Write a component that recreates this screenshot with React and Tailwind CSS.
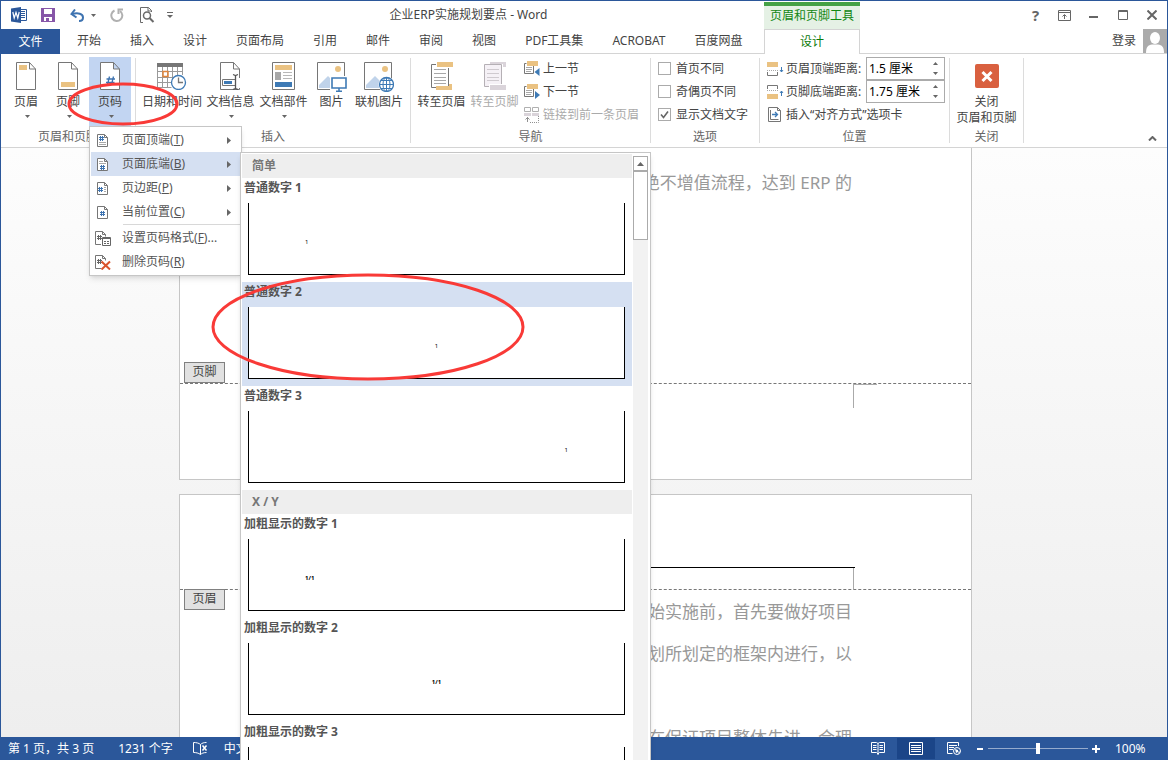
import clsx from 'clsx';

const TABS = ['开始', '插入', '设计', '页面布局', '引用', '邮件', '审阅', '视图', 'PDF工具集', 'ACROBAT', '百度网盘'];

const GALLERY = [
  {
    heading: '简单',
    items: [
      { name: '普通数字 1', sample: '1', align: 'justify-start' },
      { name: '普通数字 2', sample: '1', align: 'justify-center', active: true },
      { name: '普通数字 3', sample: '1', align: 'justify-end' },
    ],
  },
  {
    heading: 'X / Y',
    items: [
      { name: '加粗显示的数字 1', sample: '1/1', align: 'justify-start' },
      { name: '加粗显示的数字 2', sample: '1/1', align: 'justify-center' },
      { name: '加粗显示的数字 3', sample: '1/1', align: 'justify-end' },
    ],
  },
];

/* ---------- Icons ---------- */

const Svg = ({ w, h, children, className }) => (
  <svg
    width={w}
    height={h}
    viewBox={`0 0 ${w} ${h}`}
    fill="none"
    className={clsx('shrink-0', className)}
    aria-hidden="true"
  >
    {children}
  </svg>
);

const Caret = ({ className }) => (
  <Svg w={5} h={3} className={className}>
    <path d="M0 0h5L2.500 3z" fill="currentColor" />
  </Svg>
);

const WordIcon = () => (
  <Svg w={17} h={16}>
    <path d="M9.500 2.500h6v11h-6" fill="#fff" stroke="#2b579a" />
    <path d="M10 4.500h4M10 6.500h4M10 8.500h4M10 10.500h4" stroke="#2b579a" />
    <path d="M0 1.500L10 0v16L0 14.500z" fill="#2b579a" />
    <path d="M1.800 5l1.400 6L5 5.500 6.800 11l1.400-6" stroke="#fff" strokeWidth="1.200" />
  </Svg>
);

const SaveIcon = () => (
  <Svg w={14} h={14}>
    <path d="M0 0h14v14H0z" fill="#8756a8" />
    <path d="M3 1h8v5H3zM3 9h8v4H3z" fill="#fff" />
    <path d="M5 10h3v3H5z" fill="#8756a8" />
  </Svg>
);

const UndoIcon = () => (
  <Svg w={15} h={13}>
    <path d="M2 5c6-1.500 11-.5 11 3.500 0 2-1.500 3.500-4 3.500" stroke="#3e73b0" strokeWidth="2" />
    <path d="M5 .500L1.500 5l5 3.500" stroke="#3e73b0" strokeWidth="2" />
  </Svg>
);

const RedoIcon = () => (
  <Svg w={14} h={14}>
    <path d="M4.500 2.500A5.500 5.500 0 1 0 10 3" stroke="#b0b0b0" strokeWidth="2" />
    <path d="M8.500 6V1.500H13" stroke="#b0b0b0" strokeWidth="2" />
  </Svg>
);

const PreviewIcon = () => (
  <Svg w={15} h={16}>
    <path d="M3 15.500H.5V.5h8l3 3V5M8 .5V4h3.500" stroke="#6a6a6a" />
    <circle cx="7" cy="8.500" r="3.500" stroke="#6a6a6a" strokeWidth="1.500" />
    <path d="M9.500 11l4 4" stroke="#6a6a6a" strokeWidth="2" />
  </Svg>
);

const PageOutline = () => (
  <path d="M.5.5h13l6 6.500v20.500H.5zM13.500.5V7h6" fill="#fff" stroke="#767676" />
);

const HeaderIcon = () => (
  <Svg w={21} h={28}>
    <PageOutline />
    <path d="M3 3h8v5H3z" fill="#eac282" />
  </Svg>
);

const FooterIcon = () => (
  <Svg w={21} h={28}>
    <PageOutline />
    <path d="M3 20h14v5H3z" fill="#eac282" />
  </Svg>
);

const PageNumberIcon = () => (
  <Svg w={21} h={28}>
    <PageOutline />
    <path d="M9.500 14.500l-2 8M13.500 14.500l-2 8M6.500 17h8.500M6 20.500h8.500" stroke="#3e73b0" strokeWidth="1.300" />
  </Svg>
);

const DateTimeIcon = () => (
  <Svg w={30} h={28}>
    <path d="M0 1h26v4H0z" fill="#767676" />
    <path d="M.5 5v20.500h14M25.500 5v8M.5 9.500h25M.5 15.500h17M.5 20.500h14M5.500 5v20M10.500 5v20M15.500 5v12M20.500 5v8" stroke="#9a9a9a" />
    <path d="M6 9.500h5v5H6z" stroke="#e0853c" strokeWidth="1.500" />
    <circle cx="21.500" cy="20.500" r="7" fill="#fff" stroke="#3e7ab5" strokeWidth="1.300" />
    <path d="M21.500 15.500v5h4.500" stroke="#767676" strokeWidth="1.300" />
  </Svg>
);

const DocInfoIcon = () => (
  <Svg w={21} h={28}>
    <PageOutline />
    <path d="M11 16h9v10h-9z" fill="#fff" />
    <path d="M2.500 17.500h13v6h-13z" fill="#fff" stroke="#767676" />
    <path d="M4 19h8v3H4z" fill="#3e7ab5" />
    <path d="M13 12.500l2.500 1 2.500-1M15.500 13.500v13M13 27.500l2.500-1 2.500 1" stroke="#555" strokeWidth="1.300" />
  </Svg>
);

const DocPartsIcon = () => (
  <Svg w={23} h={28}>
    <path d="M.5.500h22v27H.5z" fill="#fff" stroke="#767676" />
    <path d="M3 3h17v5H3z" fill="#eac282" />
    <path d="M3 10h6v8H3z" fill="#a8a8a8" />
    <path d="M11 10.500h9M11 13.500h9M11 16.500h9" stroke="#b8b8b8" />
    <path d="M3 20h17v5H3z" fill="#3e7ab5" />
  </Svg>
);

const PictureBase = () => (
  <>
    <path d="M.5.500h27v27H.5z" fill="#fff" stroke="#767676" />
    <path d="M2 26V23l9-9 9 9v3z" fill="#c0d3ea" />
    <circle cx="21" cy="7" r="3" fill="#eac282" />
  </>
);

const PictureIcon = () => (
  <Svg w={30} h={30}>
    <PictureBase />
    <path d="M13 14h17v16H13z" fill="#fff" />
    <path d="M15 16h14v10H15z" stroke="#3e7ab5" strokeWidth="1.600" />
    <path d="M22 26v3M19 29.300h6" stroke="#3e7ab5" strokeWidth="1.500" />
  </Svg>
);

const OnlinePictureIcon = () => (
  <Svg w={30} h={30}>
    <PictureBase />
    <circle cx="22.500" cy="22.500" r="8" fill="#fff" />
    <circle cx="22.500" cy="22.500" r="7" stroke="#3e7ab5" strokeWidth="1.300" />
    <ellipse cx="22.500" cy="22.500" rx="3.500" ry="7" stroke="#3e7ab5" />
    <path d="M22.500 15.500v14M15.500 22.500h14M17 18.500h11M17 26.500h11" stroke="#3e7ab5" />
  </Svg>
);

const GotoHeaderIcon = () => (
  <Svg w={22} h={28}>
    <path d="M.5 2.500h17v23H.5z" fill="#fff" stroke="#767676" />
    <path d="M3 7.500h12M3 11.500h12M3 15.500h12M3 18.500h12M3 21.500h12" stroke="#a8a8a8" />
    <path d="M5 0h17v6H5z" fill="#fff" />
    <path d="M6 0h16v5H6zM5 24h13v-2h3v6H5z" fill="#eac282" />
  </Svg>
);

const GotoFooterIcon = () => (
  <Svg w={22} h={28}>
    <path d="M.5 2.500h17v22H.5z" fill="#f5f1f6" stroke="#b5b0b5" />
    <path d="M3 7.500h12M3 11.500h12M3 15.500h12M3 18.500h12" stroke="#cfcacf" />
    <path d="M6 0h16v5h-3V2H6z" fill="#dad4da" />
    <path d="M5 22h17v6H5z" fill="#fff" />
    <path d="M6 23h16v5H6z" fill="#dad4da" />
  </Svg>
);

const SectionIcon = ({ next }) => (
  <Svg w={16} h={15}>
    <path d="M2.500 2.500h-2v10h9V4" stroke="#767676" />
    <path d="M2 6.500h6M2 8.500h6M2 10.500h5" stroke="#a8a8a8" />
    <path d="M3 0h11v5H3z" fill="#eac282" />
    <path d={next ? 'M11 7l5 4-5 4z' : 'M15.500 7v8l-5-4z'} fill="#3e7ab5" />
  </Svg>
);

const LinkPreviousIcon = () => (
  <Svg w={16} h={16}>
    <path d="M.5.500h6v4h-6zM8.500.500h6v4h-6z" stroke="#b0b0b0" />
    <path d="M0 6h7v3H0zM8 6h7v3H8z" fill="#dad4da" />
    <path d="M3.500 15v-5M1.500 12.500l2-2 2 2" stroke="#909090" />
    <path d="M6 15.500h8.500V9" stroke="#909090" strokeDasharray="1 1" />
  </Svg>
);

const DistanceIcon = ({ footer }) => (
  <Svg w={17} h={14}>
    {footer ? (
      <>
        <path d="M.5 4V.500h10V4" stroke="#767676" />
        <path d="M0 9h11v5H0z" fill="#eac282" />
        <path d="M0 5.500h11" stroke="#a8a8a8" strokeDasharray="1 1" />
        <path d="M14.500 11V6M13 8l1.500-2L16 8" stroke="#3e7ab5" />
      </>
    ) : (
      <>
        <path d="M0 0h11v5H0z" fill="#eac282" />
        <path d="M.5 10v3.500h10V10" stroke="#767676" />
        <path d="M0 8.500h11" stroke="#a8a8a8" strokeDasharray="1 1" />
        <path d="M14.500 5v5M13 8l1.500 2L16 8" stroke="#3e7ab5" />
      </>
    )}
  </Svg>
);

const AlignTabIcon = () => (
  <Svg w={13} h={15}>
    <path d="M.5.500h9l3 3v11H.5zM9.500.5v3h3M2.500 3v9.500h8" stroke="#767676" />
    <path d="M4 7.500h5M7 5l2.500 2.500L7 10" stroke="#3e7ab5" strokeWidth="1.300" />
  </Svg>
);

const CloseRibbonIcon = () => (
  <Svg w={24} h={24}>
    <rect width="24" height="24" rx="2" fill="#d9603f" />
    <path d="M7.500 8l9 9M16.500 8l-9 9" stroke="#fff" strokeWidth="3" />
  </Svg>
);

const NumberGlyph = ({ x, y, color = '#3e73b0' }) => (
  <path
    d={`M${x + 1.5} ${y}v5M${x + 3.5} ${y}v5M${x} ${y + 1.5}h5M${x} ${y + 3.5}h5`}
    stroke={color}
  />
);

const MenuIcon = ({ kind }) => (
  <Svg w={17} h={15}>
    {(kind === 'top' || kind === 'bottom' || kind === 'margin' || kind === 'current') && (
      <path d="M2.500 1.500h7l3 3v9h-10v-12zM9.500 1.500v3h3" fill="#fff" stroke="#767676" />
    )}
    {kind === 'top' && (
      <>
        <NumberGlyph x={4} y={3} />
        <path d="M4 9.500h7M4 11.500h7" stroke="#a8a8a8" />
      </>
    )}
    {kind === 'bottom' && (
      <>
        <path d="M4 4.500h4M4 6.500h7" stroke="#a8a8a8" />
        <NumberGlyph x={5} y={8} />
      </>
    )}
    {kind === 'margin' && (
      <>
        <NumberGlyph x={3} y={6} />
        <path d="M9 6.500h2M9 8.500h2M9 10.500h2" stroke="#a8a8a8" />
      </>
    )}
    {kind === 'current' && <NumberGlyph x={5} y={6} />}
    {(kind === 'format' || kind === 'remove') && (
      <>
        <path d="M6 13.500H.5V.500h7l3 3v2M7.500.5v3h3" stroke="#767676" />
        <NumberGlyph x={2} y={4} color="#666" />
      </>
    )}
    {kind === 'format' && (
      <>
        <path d="M7.500 6.500h8v8h-8z" fill="#fff" stroke="#666" />
        <path d="M8 7.500h7M9 10.500h2M12 10.500h2M9 12.500h2M12 12.500h2" stroke="#666" />
      </>
    )}
    {kind === 'remove' && (
      <path d="M6.500 6.500l8.500 8M15 6.500l-8.500 8" stroke="#d9532c" strokeWidth="2" />
    )}
  </Svg>
);

/* ---------- Title bar and tabs ---------- */

const WindowButton = ({ label, children }) => (
  <button type="button" aria-label={label} className="flex w-[29px] items-center justify-center">
    {children}
  </button>
);

const TitleBar = () => (
  <header className="flex h-7 shrink-0">
    <div className="flex w-[172px] items-center pl-[10px] text-[#666]">
      <WordIcon />
      <button type="button" aria-label="保存" className="ml-[13px]"><SaveIcon /></button>
      <button type="button" aria-label="撤消" className="ml-[15px] flex items-center gap-1.5">
        <UndoIcon />
        <Caret />
      </button>
      <button type="button" aria-label="重复" className="ml-[14px]"><RedoIcon /></button>
      <button type="button" aria-label="打印预览" className="ml-4"><PreviewIcon /></button>
      <button type="button" aria-label="自定义快速访问工具栏" className="ml-3">
        <Svg w={6} h={6}>
          <path d="M0 .500h6" stroke="currentColor" />
          <path d="M0 3h6L3 6z" fill="currentColor" />
        </Svg>
      </button>
    </div>
    <h1 className="flex-1 text-center leading-7">企业ERP实施规划要点 - Word</h1>
    <div className="mt-px w-24 border-t-4 border-[#45a145] bg-[#e5f1e5] text-center leading-5 text-[#128712]">
      页眉和页脚工具
    </div>
    <div className="flex w-[307px] justify-end pr-px text-[#666]">
      <WindowButton label="帮助"><span className="text-[15px] font-bold">?</span></WindowButton>
      <WindowButton label="功能区显示选项">
        <Svg w={13} h={11}>
          <path d="M.5.500h12v10H.5zM1 2.500h12M6.500 9V5M4.500 6.500l2-2 2 2" stroke="currentColor" />
        </Svg>
      </WindowButton>
      <WindowButton label="最小化">
        <Svg w={9} h={10}><path d="M0 6h9v2H0z" fill="currentColor" /></Svg>
      </WindowButton>
      <WindowButton label="最大化">
        <Svg w={10} h={10}><path d="M.5.500h9v9h-9zM0 1.500h10" stroke="currentColor" /></Svg>
      </WindowButton>
      <WindowButton label="关闭">
        <Svg w={10} h={10}><path d="M.5.500l9 9M9.500.500l-9 9" stroke="currentColor" strokeWidth="2" /></Svg>
      </WindowButton>
    </div>
  </header>
);

const TabBar = () => (
  <nav className="flex h-[25px] shrink-0 leading-6">
    <button type="button" className="w-[59px] bg-[#2b579a] text-white">文件</button>
    <div className="flex flex-1 gap-[29px] border-b border-[#d4d4d4] pl-[17px]">
      {TABS.map((tab) => (
        <button key={tab} type="button" className="whitespace-nowrap">{tab}</button>
      ))}
    </div>
    <button type="button" className="w-24 border-x border-t border-[#d4d4d4] text-[#0a7a0a]">设计</button>
    <div className="flex w-[307px] justify-end gap-[7px] border-b border-[#d4d4d4]">
      <button type="button" className="leading-5">登录</button>
      <Svg w={24} h={24}>
        <path d="M0 0h24v24H0z" fill="#ababab" />
        <ellipse cx="12" cy="9" rx="5" ry="6" fill="#fff" />
        <path d="M3 24c0-6 2-8 6-8.500h6c4 .5 6 2.500 6 8.500z" fill="#fff" />
      </Svg>
    </div>
  </nav>
);

/* ---------- Page number menu ---------- */

const Gallery = () => (
  <div className="absolute left-[149px] top-0 z-10 flex w-[411px] border border-[#c6c6c6] bg-white p-px shadow-md">
    <div className="w-[390px]">
      {GALLERY.map(({ heading, items }) => (
        <section key={heading}>
          <h2 className="h-6 bg-[#eee] pl-2.5 font-bold leading-6 text-[#777]">
            {heading}
          </h2>
          {items.map(({ name, sample, align, active }) => (
            <button
              key={name}
              type="button"
              className={clsx('block w-full pb-[7px] pl-0.5 text-left', active && 'bg-[#d5e0f2]')}
            >
              <span className="block h-[25px] font-bold leading-5 text-[#555]">{name}</span>
              <span
                className={clsx(
                  'ml-1 flex h-[72px] w-[377px] items-center border-b border-l border-r border-black bg-white px-14 pt-1.5 text-[6px] text-black',
                  align,
                  sample.length > 1 && 'font-bold',
                )}
              >
                {sample}
              </span>
            </button>
          ))}
        </section>
      ))}
    </div>
    <div className="ml-px mt-0.5 w-[15px] bg-[#f2f2f2]">
      <div className="flex h-[15px] items-center justify-center border border-[#ababab] bg-white text-[#666]">
        <Svg w={7} h={4}><path d="M0 4h7L3.500 0z" fill="currentColor" /></Svg>
      </div>
      <div className="h-[69px] border border-[#ababab] bg-white" />
    </div>
  </div>
);

const MenuItem = ({ icon, label, accessKey, suffix = '', submenu, active, children }) => (
  <div className="relative">
    <button
      type="button"
      className={clsx('flex h-6 w-full items-center pl-1 pr-[9px]', active && 'bg-[#d5e0f2]')}
    >
      <MenuIcon kind={icon} />
      <span className="ml-[10px] flex-1 text-left">
        {label}(<u>{accessKey}</u>){suffix}
      </span>
      {submenu && (
        <Svg w={4} h={7}><path d="M0 0v7l4-3.500z" fill="#666" /></Svg>
      )}
    </button>
    {children}
  </div>
);

const PageNumberMenu = () => (
  <div className="absolute left-0 top-full z-20 w-[153px] border border-[#c6c6c6] bg-white p-px leading-5 text-[#555] shadow-md">
    <MenuItem icon="top" label="页面顶端" accessKey="T" submenu />
    <MenuItem icon="bottom" label="页面底端" accessKey="B" submenu active>
      <Gallery />
    </MenuItem>
    <MenuItem icon="margin" label="页边距" accessKey="P" submenu />
    <MenuItem icon="current" label="当前位置" accessKey="C" submenu />
    <div className="mb-px ml-8 h-px bg-[#d8d8d8]" />
    <MenuItem icon="format" label="设置页码格式" accessKey="F" suffix="..." />
    <MenuItem icon="remove" label="删除页码" accessKey="R" />
  </div>
);

/* ---------- Ribbon ---------- */

const Group = ({ label, className, bodyClassName, children }) => (
  <section className={clsx('my-1 flex shrink-0 flex-col border-r border-[#dcdcdc]', className)}>
    <div className={clsx('-mt-px flex flex-1', bodyClassName)}>{children}</div>
    <h2 className="h-3.5 text-center leading-4 text-[#666]">{label}</h2>
  </section>
);

const BigButton = ({ icon, label, width, caret, active, disabled }) => (
  <button
    type="button"
    disabled={disabled}
    className={clsx(
      'flex h-[69px] shrink-0 flex-col items-center whitespace-nowrap pt-[5px]',
      width,
      active && 'bg-[#c2d5f2]',
      disabled && 'text-[#aaa]',
    )}
  >
    <span className="flex h-[30px] items-start">{icon}</span>
    <span className="leading-5">{label}</span>
    {caret && <Caret className="ml-0.5 mt-[3px] text-[#666]" />}
  </button>
);

const SmallButton = ({ icon, label, disabled }) => (
  <button
    type="button"
    disabled={disabled}
    className={clsx('flex h-[23px] items-center gap-[3px] whitespace-nowrap', disabled && 'text-[#aaa]')}
  >
    {icon}
    {label}
  </button>
);

const CheckOption = ({ label, checked }) => (
  <label className="flex h-[23px] items-center gap-[5px]">
    <span className="grid">
      <input
        type="checkbox"
        defaultChecked={checked}
        className="peer col-start-1 row-start-1 size-[13px] appearance-none border border-[#ababab] bg-white"
      />
      <Svg w={13} h={13} className="pointer-events-none invisible col-start-1 row-start-1 peer-checked:visible">
        <path d="M3 6.500L5.500 9.500 10 3.500" stroke="#666" strokeWidth="1.600" />
      </Svg>
    </span>
    {label}
  </label>
);

const DistanceField = ({ id, label, value, footer }) => (
  <div className="flex h-[23px] items-center">
    <DistanceIcon footer={footer} />
    <label htmlFor={id} className="ml-0.5 flex-1 whitespace-nowrap">{label}</label>
    <div className="flex h-[23px] w-[79px] border border-[#ababab] bg-white">
      <input id={id} defaultValue={value} className="w-[60px] pl-0.5 text-black outline-none" />
      <div className="flex flex-1 flex-col items-center justify-center gap-[7px] text-[#666]">
        <button type="button" aria-label="增加"><Caret className="block rotate-180" /></button>
        <button type="button" aria-label="减少"><Caret className="block" /></button>
      </div>
    </div>
  </div>
);

const Ribbon = () => (
  <div className="flex h-[94px] shrink-0 border-b border-[#d4d4d4]">
    <Group label="页眉和页脚" className="w-[135px]" bodyClassName="pl-1">
      <BigButton icon={<HeaderIcon />} label="页眉" width="w-[42px]" caret />
      <BigButton icon={<FooterIcon />} label="页脚" width="w-[42px]" caret />
      <div className="relative h-[69px]">
        <BigButton icon={<PageNumberIcon />} label="页码" width="w-[42px]" caret active />
        <PageNumberMenu />
      </div>
    </Group>
    <Group label="插入" className="w-[275px]" bodyClassName="pl-1">
      <BigButton icon={<DateTimeIcon />} label="日期和时间" width="w-16" />
      <BigButton icon={<DocInfoIcon />} label="文档信息" width="w-[53px]" caret />
      <BigButton icon={<DocPartsIcon />} label="文档部件" width="w-[53px]" caret />
      <BigButton icon={<PictureIcon />} label="图片" width="w-[43px]" />
      <BigButton icon={<OnlinePictureIcon />} label="联机图片" width="w-[52px]" />
    </Group>
    <Group label="导航" className="w-60" bodyClassName="pl-1">
      <BigButton icon={<GotoHeaderIcon />} label="转至页眉" width="w-[53px]" />
      <BigButton icon={<GotoFooterIcon />} label="转至页脚" width="w-[53px]" disabled />
      <div className="ml-[3px]">
        <SmallButton icon={<SectionIcon />} label="上一节" />
        <SmallButton icon={<SectionIcon next />} label="下一节" />
        <SmallButton icon={<LinkPreviousIcon />} label="链接到前一条页眉" disabled />
      </div>
    </Group>
    <Group label="选项" className="w-[109px]" bodyClassName="pl-[7px]">
      <div>
        <CheckOption label="首页不同" />
        <CheckOption label="奇偶页不同" />
        <CheckOption label="显示文档文字" checked />
      </div>
    </Group>
    <Group label="位置" className="w-[190px]" bodyClassName="pl-[7px] pr-1">
      <div className="flex-1">
        <DistanceField id="header-distance" label="页眉顶端距离:" value="1.5 厘米" />
        <DistanceField id="footer-distance" label="页脚底端距离:" value="1.75 厘米" footer />
        <button type="button" className="ml-px flex h-[23px] items-center gap-[5px]">
          <AlignTabIcon />
          插入“对齐方式”选项卡
        </button>
      </div>
    </Group>
    <Group label="关闭" className="w-[74px]">
      <button type="button" className="flex flex-1 flex-col items-center self-start whitespace-nowrap pt-[7px] leading-4">
        <CloseRibbonIcon />
        <span className="mt-1.5">关闭</span>
        <span>页眉和页脚</span>
      </button>
    </Group>
    <button type="button" aria-label="折叠功能区" className="ml-auto mr-2.5 self-end pb-1.5">
      <Svg w={9} h={5}><path d="M1 4.500L4.500 1 8 4.500" stroke="#666" strokeWidth="2" /></Svg>
    </button>
  </div>
);

/* ---------- Document ---------- */

const ZoneTag = ({ children }) => (
  <span className="ml-1 block h-[21px] w-[41px] border border-[#808080] bg-[#e1e1e1] text-center leading-[18px]">
    {children}
  </span>
);

const DocumentArea = () => (
  <main className="flex min-h-0 flex-1 flex-col items-center gap-[14px] overflow-hidden bg-linear-to-b from-[#fdfdfd] to-[#eeeeee] pr-[17px] text-[17px] leading-[42px] text-[#999]">
    <article className="w-[793px] shrink-0 border-x border-b border-[#c6c6c6] bg-white">
      <div className="flex h-[236px] flex-col border-b border-dashed border-[#777] pt-[14px]">
        <p className="pr-[119px] text-right">绝不增值流程，达到 ERP 的</p>
        <div className="mt-auto text-xs text-[#444]"><ZoneTag>页脚</ZoneTag></div>
      </div>
      <div className="flex h-[95px] justify-end">
        <div className="mr-[94px] h-6 w-6 border-l border-t border-[#aaa]" />
      </div>
    </article>
    <article className="w-[793px] shrink-0 border border-[#c6c6c6] bg-white">
      <div className="flex h-[95px] items-end border-b border-dashed border-[#777]">
        <div className="ml-[119px] mr-[116px] h-[22px] flex-1 border-t border-black">
          <div className="mr-px h-full border-r border-[#aaa]" />
        </div>
      </div>
      <div className="-mt-px text-xs text-[#444]"><ZoneTag>页眉</ZoneTag></div>
      <div className="-mt-[19px] pr-[119px] text-right">
        <p>始实施前，首先要做好项目</p>
        <p>划所划定的框架内进行，以</p>
        <p className="pt-[42px]">在保证项目整体先进、合理</p>
      </div>
    </article>
  </main>
);

/* ---------- Status bar ---------- */

const StatusBar = () => (
  <footer className="flex h-[23px] shrink-0 items-center bg-[#2b579a] pl-[7px] text-white">
    <span>第 1 页，共 3 页</span>
    <span className="ml-6">1231 个字</span>
    <Svg w={15} h={13} className="ml-5">
      <path d="M7.500 2.500C6 1 3 .500.5.500v10c2.500 0 5 .5 7 2 1-1 3-2 6-2M7.500 2.500v10M7.500 2.500C9 1 11 .500 13.500.500" stroke="#fff" />
      <path d="M9.500 3.500l4 5M13.500 3.500l-4 5" stroke="#fff" strokeWidth="1.500" />
    </Svg>
    <span className="ml-4">中文</span>
    <div className="ml-auto flex items-center">
      <button type="button" aria-label="阅读视图" className="mr-3">
        <Svg w={14} h={13}>
          <path d="M7 1.500L5.500.500H.5v10h5L7 12l1.500-1.500h5V.500h-5zM7 1.500V13M2 3.500h3.500M2 5.500h3.500M2 7.500h3.500M8.500 3.500H12M8.500 5.500H12M8.500 7.500H12" stroke="#fff" />
        </Svg>
      </button>
      <button type="button" aria-label="页面视图" className="flex h-[21px] w-[38px] items-center justify-center bg-[#1b4588]">
        <Svg w={14} h={13}>
          <path d="M.5.500h13v12H.5zM2 3.500h10M2 5.500h10M2 7.500h10M2 9.500h10" stroke="#fff" />
        </Svg>
      </button>
      <button type="button" aria-label="Web 版式视图" className="ml-3">
        <Svg w={14} h={13}>
          <path d="M5.500 11.500h-5V.500h11V4M2 3.500h8M2 5.500h5M2 7.500h4" stroke="#fff" />
          <circle cx="10" cy="9" r="3.500" stroke="#fff" />
          <path d="M8 7l3 1v2l-2 1zM11.500 9l1.500 1-1.500 2z" fill="#fff" />
        </Svg>
      </button>
      <button type="button" aria-label="缩小" className="ml-4">
        <Svg w={6} h={10}><path d="M0 4h6v2H0z" fill="#fff" /></Svg>
      </button>
      <input
        type="range"
        aria-label="显示比例"
        min="10"
        max="190"
        defaultValue="100"
        className="ml-[5px] mr-1 h-[11px] w-[100px] appearance-none bg-linear-to-b from-transparent from-45% via-white via-45% to-transparent to-55% [&::-webkit-slider-thumb]:h-[11px] [&::-webkit-slider-thumb]:w-1 [&::-webkit-slider-thumb]:appearance-none [&::-webkit-slider-thumb]:bg-white"
      />
      <button type="button" aria-label="放大">
        <Svg w={8} h={10}><path d="M0 4h8v2H0zM3 1h2v8H3z" fill="#fff" /></Svg>
      </button>
      <span className="ml-[15px] w-[52px]">100%</span>
    </div>
  </footer>
);

/* Hand-drawn red markers that sit on top of the window */
const Highlights = () => (
  <>
    <Svg w={112} h={44} className="pointer-events-none absolute left-[66px] top-[81px] z-30">
      <ellipse cx="56" cy="22" rx="54" ry="20" stroke="#f93a37" strokeWidth="3" />
    </Svg>
    <Svg w={314} h={108} className="pointer-events-none absolute left-[210px] top-[272px] z-30">
      <ellipse cx="157" cy="54" rx="155" ry="52" stroke="#f93a37" strokeWidth="3" />
    </Svg>
  </>
);

export default function App() {
  return (
    <div className="relative flex h-screen flex-col overflow-hidden border-x border-t border-[#2b579a] bg-white font-['Noto_Sans','Noto_Sans_CJK_SC',sans-serif] text-xs text-[#444]">
      <TitleBar />
      <TabBar />
      <Ribbon />
      <DocumentArea />
      <StatusBar />
      <Highlights />
    </div>
  );
}
